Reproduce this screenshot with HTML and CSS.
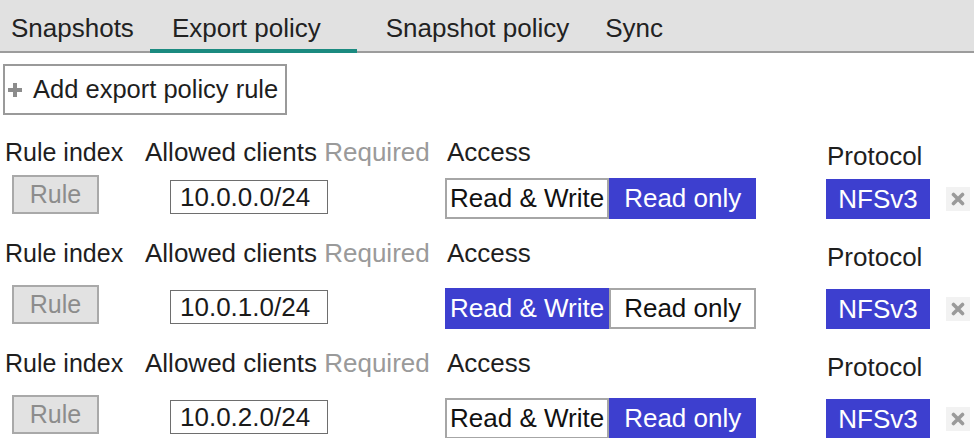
FILE: index.html
```html
<!DOCTYPE html>
<html lang="en">
<head>
    <meta charset="UTF-8">
    <meta name="viewport" content="width=device-width, initial-scale=1.0">
    <title>Export policy</title>
    <link rel="stylesheet" href="styles.css">
</head>
<body>
    <nav class="tabs">
        <a class="tab tab-snapshots">Snapshots</a>
        <a class="tab tab-export active">Export policy</a>
        <a class="tab tab-snap-policy">Snapshot policy</a>
        <a class="tab tab-sync">Sync</a>
    </nav>

    <main class="content">
        <button type="button" class="add-rule">
            <svg class="plus" width="16" height="16" viewBox="0 0 16 16"><rect x="6" y="1" width="4" height="14" fill="#8c8c8c"/><rect x="1" y="6" width="14" height="4" fill="#8c8c8c"/></svg>
            Add export policy rule
        </button>

        <div class="rule">
            <div class="field field-index">
                <label>Rule index</label>
                <button type="button" class="rule-btn" disabled>Rule</button>
            </div>
            <div class="field field-clients">
                <label>Allowed clients <span class="hint">Required</span></label>
                <input type="text" class="clients" value="10.0.0.0/24">
            </div>
            <div class="field field-access">
                <label>Access</label>
                <div class="toggle">
                    <span class="opt opt-rw">Read &amp; Write</span>
                    <span class="opt opt-ro on">Read only</span>
                </div>
            </div>
            <div class="field field-protocol">
                <label>Protocol</label>
                <div class="proto-row">
                    <span class="proto">NFSv3</span>
                    <button type="button" class="remove"><svg width="14" height="14" viewBox="0 0 14 14"><path d="M2.5 2.5 L11.5 11.5 M11.5 2.5 L2.5 11.5" stroke="#9a9a9a" stroke-width="3.6" stroke-linecap="round"/></svg></button>
                </div>
            </div>
        </div>

        <div class="rule">
            <div class="field field-index">
                <label>Rule index</label>
                <button type="button" class="rule-btn" disabled>Rule</button>
            </div>
            <div class="field field-clients">
                <label>Allowed clients <span class="hint">Required</span></label>
                <input type="text" class="clients" value="10.0.1.0/24">
            </div>
            <div class="field field-access">
                <label>Access</label>
                <div class="toggle">
                    <span class="opt opt-rw on">Read &amp; Write</span>
                    <span class="opt opt-ro">Read only</span>
                </div>
            </div>
            <div class="field field-protocol">
                <label>Protocol</label>
                <div class="proto-row">
                    <span class="proto">NFSv3</span>
                    <button type="button" class="remove"><svg width="14" height="14" viewBox="0 0 14 14"><path d="M2.5 2.5 L11.5 11.5 M11.5 2.5 L2.5 11.5" stroke="#9a9a9a" stroke-width="3.6" stroke-linecap="round"/></svg></button>
                </div>
            </div>
        </div>

        <div class="rule">
            <div class="field field-index">
                <label>Rule index</label>
                <button type="button" class="rule-btn" disabled>Rule</button>
            </div>
            <div class="field field-clients">
                <label>Allowed clients <span class="hint">Required</span></label>
                <input type="text" class="clients" value="10.0.2.0/24">
            </div>
            <div class="field field-access">
                <label>Access</label>
                <div class="toggle">
                    <span class="opt opt-rw">Read &amp; Write</span>
                    <span class="opt opt-ro on">Read only</span>
                </div>
            </div>
            <div class="field field-protocol">
                <label>Protocol</label>
                <div class="proto-row">
                    <span class="proto">NFSv3</span>
                    <button type="button" class="remove"><svg width="14" height="14" viewBox="0 0 14 14"><path d="M2.5 2.5 L11.5 11.5 M11.5 2.5 L2.5 11.5" stroke="#9a9a9a" stroke-width="3.6" stroke-linecap="round"/></svg></button>
                </div>
            </div>
        </div>
    </main>
</body>
</html>
```

FILE: styles.css
```css
body {
    margin: 0;
    padding: 0;
    background-color: #ffffff;
    color: #1e1e1e;
    font-family: "Liberation Sans", Arial, sans-serif;
    font-size: 26px;
    overflow: hidden;
}
.tabs {
    display: flex;
    align-items: flex-start;
    height: 51px;
    background-color: #e1e1e1;
    border-bottom: 2px solid #9c9c9c;
}
.tab {
    box-sizing: border-box;
    height: 51px;
    padding-top: 13px;
    line-height: 30px;
    color: #222222;
    white-space: nowrap;
}
.tab-snapshots {
    padding-left: 11px;
    padding-right: 16px;
}
.tab-export {
    padding-left: 22px;
    padding-right: 36px;
}
.tab-snap-policy {
    padding-left: 29px;
    padding-right: 18px;
}
.tab-sync {
    padding-left: 18px;
}
.tab.active {
    height: 53px;
    margin-bottom: -2px;
    border-bottom: 4px solid #1b8a80;
}
.content {
    padding: 11px 0 0 3px;
}
.add-rule {
    display: flex;
    align-items: center;
    box-sizing: border-box;
    width: 284px;
    height: 51px;
    padding: 0 0 0 2px;
    border: 2px solid #9a9a9a;
    background-color: #ffffff;
    color: #1e1e1e;
    font-family: inherit;
    font-size: 25.5px;
    cursor: pointer;
}
.add-rule .plus {
    margin-right: 10px;
    flex: none;
}
.rule {
    display: grid;
    grid-template-columns: 140px 302px 380px auto;
    align-items: start;
    height: 110px;
    margin-left: 2px;
}
.rule:first-of-type {
    margin-top: 13px;
}
.rule:last-of-type {
    height: auto;
}
.field {
    display: flex;
    flex-direction: column;
    align-items: flex-start;
}
.field label {
    line-height: 30px;
    white-space: nowrap;
}
/* first rule sits its labels closer to the controls */
.rule:first-of-type .field label {
    margin-top: 9px;
    margin-bottom: -9px;
}
.field-index label {
    font-size: 25px;
}
.hint {
    color: #9a9a9a;
}
.rule-btn {
    box-sizing: border-box;
    width: 87px;
    height: 39px;
    margin: 17px 0 0 7px;
    padding: 0;
    border: 2px solid #a9a9a9;
    background-color: #e2e2e2;
    color: #8c8c8c;
    font-family: inherit;
    font-size: 25px;
}
.clients {
    box-sizing: border-box;
    width: 158px;
    height: 34px;
    margin: 22px 0 0 25px;
    padding: 0 0 0 9px;
    border: 1px solid #6e6e6e;
    color: #1a1a1a;
    font-family: inherit;
    font-size: 26px;
    outline: none;
}
.toggle {
    display: flex;
    height: 41px;
    margin: 20px 0 0 -2px;
}
.opt {
    box-sizing: border-box;
    height: 41px;
    line-height: 37px;
    border: 2px solid #a6a6a6;
    background-color: #ffffff;
    color: #111111;
    white-space: nowrap;
}
.opt-rw {
    padding: 0 3px;
}
.opt-ro {
    padding: 0 13px;
}
.opt.on {
    background-color: #3d3fcf;
    border-color: #3d3fcf;
    color: #ffffff;
}
.field-protocol label {
    padding-top: 4px;
}
.proto-row {
    display: flex;
    align-items: center;
    margin: 17px 0 0 -1px;
}
.proto {
    box-sizing: border-box;
    width: 104px;
    height: 40px;
    line-height: 40px;
    text-align: center;
    background-color: #3d3fcf;
    color: #ffffff;
}
.remove {
    display: flex;
    align-items: center;
    justify-content: center;
    width: 24px;
    height: 24px;
    margin-left: 16px;
    padding: 0;
    border: none;
    background-color: #f2f2f2;
    cursor: pointer;
}
```
